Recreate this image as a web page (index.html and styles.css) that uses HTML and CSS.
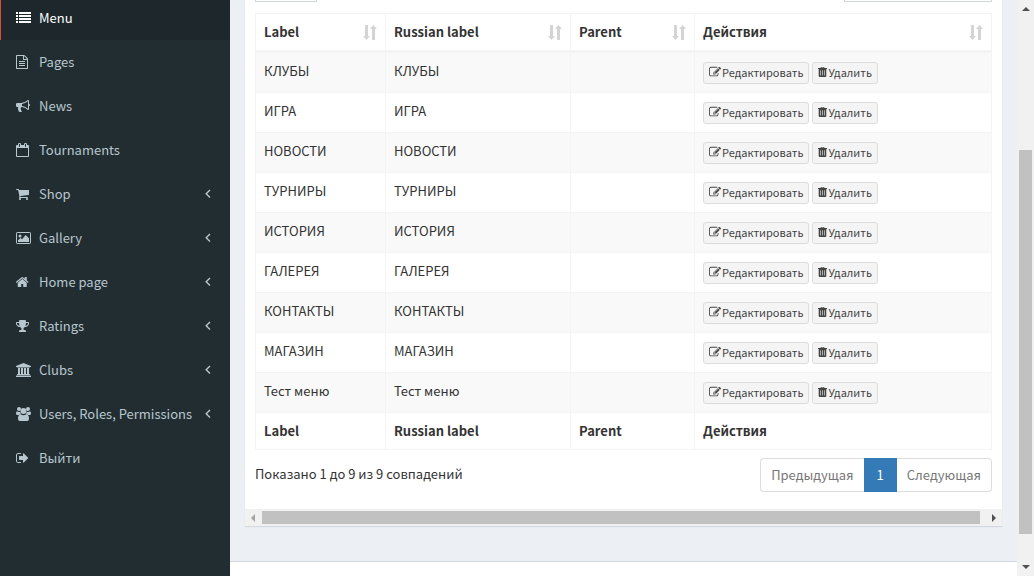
FILE: index.html
```html
<!DOCTYPE html>
<html lang="ru">
<head>
<meta charset="utf-8">
<title>Menu</title>
<link rel="stylesheet" href="styles.css">
</head>
<body>
<svg class="sprite" aria-hidden="true">
  <symbol id="i-list" viewBox="0 0 15 14"><path d="M0 1h2v2H0zM3 1h12v2H3zM0 4h2v2H0zM3 4h12v2H3zM0 7h2v2H0zM3 7h12v2H3zM0 10h2v2H0zM3 10h12v2H3z"/></symbol>
  <symbol id="i-file" viewBox="128 0 1920 1792"><path d="M1596 380q28 28 48 76t20 88v1152q0 40-28 68t-68 28h-1344q-40 0-68-28t-28-68v-1600q0-40 28-68t68-28h896q40 0 88 20t76 48zm-444-244v376h376q-10-29-22-41l-313-313q-12-12-41-22zm384 1528v-1024h-416q-40 0-68-28t-28-68v-416h-768v1536h1280zm-1024-864q0-14 9-23t23-9h704q14 0 23 9t9 23v64q0 14-9 23t-23 9h-704q-14 0-23-9t-9-23v-64zm736 224q14 0 23 9t9 23v64q0 14-9 23t-23 9h-704q-14 0-23-9t-9-23v-64q0-14 9-23t23-9h704zm0 256q14 0 23 9t9 23v64q0 14-9 23t-23 9h-704q-14 0-23-9t-9-23v-64q0-14 9-23t23-9h704z"/></symbol>
  <symbol id="i-horn" viewBox="0 0 1920 1792"><path d="M1664 640q53 0 90.5 37.5t37.5 90.5-37.500 90.500-90.500 37.500v384q0 52-38 90t-90 38q-417-347-812-380-58 19-91 66t-31 100.500 40 92.500q-20 33-23 65.500t6 58 33.500 55 48 50 61.500 50.500q-29 58-111.500 83t-168.500 11.500-132-55.500q-7-23-29.500-87.500t-32-94.500-23-89-15-101 3.500-98.500 22-110.500h-122q-66 0-113-47t-47-113v-192q0-66 47-113t113-47h480q435 0 896-384 52 0 90 38t38 90v384zm-128 604v-954q-394 302-768 343v270q377 42 768 341z"/></symbol>
  <symbol id="i-cal" viewBox="64 0 1920 1792"><path d="M192 1664h1408v-1024h-1408v1024zm384-1216v-288q0-14-9-23t-23-9h-64q-14 0-23 9t-9 23v288q0 14 9 23t23 9h64q14 0 23-9t9-23zm768 0v-288q0-14-9-23t-23-9h-64q-14 0-23 9t-9 23v288q0 14 9 23t23 9h64q14 0 23-9t9-23zm384-64v1280q0 52-38 90t-90 38h-1408q-52 0-90-38t-38-90v-1280q0-52 38-90t90-38h128v-96q0-66 47-113t113-47h64q66 0 113 47t47 113v96h384v-96q0-66 47-113t113-47h64q66 0 113 47t47 113v96h128q52 0 90 38t38 90z"/></symbol>
  <symbol id="i-cart" viewBox="64 0 1920 1792"><path d="M704 1536q0 52-38 90t-90 38-90-38-38-90 38-90 90-38 90 38 38 90zm896 0q0 52-38 90t-90 38-90-38-38-90 38-90 90-38 90 38 38 90zm128-1088v512q0 24-16.500 42.500t-40.500 21.500l-1044 122q13 60 13 70 0 16-24 64h920q26 0 45 19t19 45-19 45-45 19h-1024q-26 0-45-19t-19-45q0-11 8-31.500t16-36 21.500-40 15.500-29.500l-177-823h-204q-26 0-45-19t-19-45 19-45 45-19h256q16 0 28.500 6.500t19.500 15.500 13 24.500 8 26 5.500 29.500 4.500 26h1201q26 0 45 19t19 45z"/></symbol>
  <symbol id="i-pic" viewBox="0 0 15 14"><rect x=".5" y="1.500" width="14" height="11" rx=".7" fill="none" stroke="currentColor"/><circle cx="4" cy="5" r="1.500"/><path d="M2 11V9.300L4.500 7 6 8.200 9.700 4 13 7.300V11z"/></symbol>
  <symbol id="i-home" viewBox="100 0 1920 1792"><path d="M1472 992v480q0 26-19 45t-45 19h-384v-384h-256v384h-384q-26 0-45-19t-19-45v-480l1-6 575-474 575 474q1 2 1 6zm223-69l-62 74q-8 9-21 11h-3q-13 0-21-7l-692-577-692 577q-12 8-24 7-13-2-21-11l-62-74q-8-10-7-23.500t11-21.500l719-599q32-26 76-26t76 26l244 204v-195q0-14 9-23t23-9h192q14 0 23 9t9 23v408l219 182q10 8 11 21.500t-7 23.500z"/></symbol>
  <symbol id="i-cup" viewBox="64 0 1920 1792"><path d="M522 883q-74-162-74-371h-256v96q0 78 94.500 162t235.500 113zm1078-275v-96h-256q0 209-74 371 141-29 235.500-113t94.500-162zm128-128v128q0 71-41.500 143t-112 130-173 97.500-215.500 44.500q-42 54-95 95-38 34-52.500 72.500t-14.500 89.500q0 54 30.500 91t97.500 37q75 0 133.500 45.500t58.500 114.500v64q0 14-9 23t-23 9h-832q-14 0-23-9t-9-23v-64q0-69 58.500-114.500t133.500-45.500q67 0 97.500-37t30.500-91q0-51-14.500-89.500t-52.500-72.500q-53-41-95-95-113-5-215.500-44.500t-173-97.500-112-130-41.500-143v-128q0-40 28-68t68-28h288v-96q0-66 47-113t113-47h576q66 0 113 47t47 113v96h288q40 0 68 28t28 68z"/></symbol>
  <symbol id="i-bank" viewBox="0 0 15 14"><path d="M7.500 0 15 3v1h-1v.6H1V4H0V3zM2 5h2v6h1V5h2v6h1V5h2v6h1V5h2v6h.6l.4.5v.5H1v-.5l.4-.5H2zM.5 12.500h14l.5.5v1H0v-1z"/></symbol>
  <symbol id="i-users" viewBox="0 0 15 14"><circle cx="3" cy="2" r="2"/><circle cx="12" cy="2" r="2"/><circle cx="7.500" cy="4" r="3"/><path d="M1 4.200q1 .8 2 .8t1.400-.3Q4.300 6 5 7 3.600 7 2.800 8H1.500Q0 8 0 6.700 0 4.600 1 4.200zM14 4.200q-1 .8-2 .8t-1.400-.3q.1 1.300-.6 2.300 1.400 0 2.200 1h1.300Q15 8 15 6.700q0-2.100-1-2.500zM4.800 7.200q1.200 1.100 2.700 1.100t2.700-1.100Q13 7.200 13 11.700 13 14 11 14H4q-2 0-2-2.300 0-4.500 2.800-4.500z"/></symbol>
  <symbol id="i-exit" viewBox="64 0 1920 1792"><path d="M704 1440q0 4 1 20t.5 26.500-3 23.500-10 19.500-20.500 6.500h-320q-119 0-203.500-84.500t-84.500-203.500v-704q0-119 84.500-203.500t203.500-84.500h320q13 0 22.500 9.500t9.500 22.500q0 4 1 20t.5 26.500-3 23.500-10 19.500-20.500 6.500h-320q-66 0-113 47t-47 113v704q0 66 47 113t113 47h312l11.500 1 11.500 3 8 5.500 7 9 2 13.500zm928-544q0 26-19 45l-544 544q-19 19-45 19t-45-19-19-45v-288h-448q-26 0-45-19t-19-45v-384q0-26 19-45t45-19h448v-288q0-26 19-45t45-19 45 19l544 544q19 19 19 45z"/></symbol>
  <symbol id="i-left" viewBox="0 0 6 10"><path d="M5 1 1.200 4.700 5 8.400" fill="none" stroke="currentColor" stroke-width="1.400"/></symbol>
  <symbol id="i-edit" viewBox="0 0 1792 1792"><path d="M888 1184l116-116-152-152-116 116v56h96v96h56zm440-720q-16-16-33 1l-350 350q-17 17-1 33t33-1l350-350q17-17 1-33zm80 594v190q0 119-84.500 203.500t-203.500 84.500h-832q-119 0-203.500-84.500t-84.500-203.500v-832q0-119 84.500-203.500t203.500-84.500h832q63 0 117 25 15 7 18 23 3 17-9 29l-49 49q-14 14-32 8-23-6-45-6h-832q-66 0-113 47t-47 113v832q0 66 47 113t113 47h832q66 0 113-47t47-113v-126q0-13 9-22l64-64q15-15 35-7t20 29zm-96-738l288 288-672 672h-288v-288zm444 132l-92 92-288-288 92-92q28-28 68-28t68 28l152 152q28 28 28 68t-28 68z"/></symbol>
  <symbol id="i-trash" viewBox="0 0 9 12"><path fill-rule="evenodd" d="M0 2h2.400L3 1h3L6.600 2H9v1H8.300v7q0 1-1 1H1.700q-1 0-1-1V3H0zM3.400 2h2.200l-.2-.4H3.600zM2.400 4.200v5.300H3V4.200zM4.200 4.200v5.300h.6V4.200zM6 4.200v5.300h.6V4.200z"/></symbol>
  <symbol id="i-sort" viewBox="0 0 14 15"><path d="M2 0h3v11h2l-3.500 4L0 11h2zM9 15h3V4h2L10.500 0 7 4h2z"/></symbol>
</svg>

<div class="app">
  <nav class="sidebar" aria-label="Main">
    <a class="item active" href="#"><svg class="ico"><use href="#i-list"/></svg><span>Menu</span></a>
    <a class="item" href="#"><svg class="ico"><use href="#i-file"/></svg><span>Pages</span></a>
    <a class="item" href="#"><svg class="ico"><use href="#i-horn"/></svg><span>News</span></a>
    <a class="item" href="#"><svg class="ico"><use href="#i-cal"/></svg><span>Tournaments</span></a>
    <a class="item" href="#"><svg class="ico"><use href="#i-cart"/></svg><span>Shop</span><svg class="chev"><use href="#i-left"/></svg></a>
    <a class="item" href="#"><svg class="ico"><use href="#i-pic"/></svg><span>Gallery</span><svg class="chev"><use href="#i-left"/></svg></a>
    <a class="item" href="#"><svg class="ico"><use href="#i-home"/></svg><span>Home page</span><svg class="chev"><use href="#i-left"/></svg></a>
    <a class="item" href="#"><svg class="ico"><use href="#i-cup"/></svg><span>Ratings</span><svg class="chev"><use href="#i-left"/></svg></a>
    <a class="item" href="#"><svg class="ico"><use href="#i-bank"/></svg><span>Clubs</span><svg class="chev"><use href="#i-left"/></svg></a>
    <a class="item" href="#"><svg class="ico"><use href="#i-users"/></svg><span>Users, Roles, Permissions</span><svg class="chev"><use href="#i-left"/></svg></a>
    <a class="item" href="#"><svg class="ico"><use href="#i-exit"/></svg><span>Выйти</span></a>
  </nav>

  <div class="page">
    <main class="content">
      <section class="card">
        <div class="card-body">
          <div class="filters">
            <select class="field length" aria-label="Записей на странице"><option></option></select>
            <input class="field search" type="search" aria-label="Поиск">
          </div>
          <table class="grid">
            <colgroup><col class="c-label"><col class="c-rus"><col class="c-parent"><col></colgroup>
            <thead>
              <tr>
                <th><div class="head">Label<svg class="sort"><use href="#i-sort"/></svg></div></th>
                <th><div class="head">Russian label<svg class="sort"><use href="#i-sort"/></svg></div></th>
                <th><div class="head">Parent<svg class="sort"><use href="#i-sort"/></svg></div></th>
                <th><div class="head">Действия<svg class="sort"><use href="#i-sort"/></svg></div></th>
              </tr>
            </thead>
            <tbody>
              <tr><td>КЛУБЫ</td><td>КЛУБЫ</td><td></td><td><div class="actions"><button class="btn"><svg class="edit"><use href="#i-edit"/></svg>Редактировать</button><button class="btn"><svg class="trash"><use href="#i-trash"/></svg>Удалить</button></div></td></tr>
              <tr><td>ИГРА</td><td>ИГРА</td><td></td><td><div class="actions"><button class="btn"><svg class="edit"><use href="#i-edit"/></svg>Редактировать</button><button class="btn"><svg class="trash"><use href="#i-trash"/></svg>Удалить</button></div></td></tr>
              <tr><td>НОВОСТИ</td><td>НОВОСТИ</td><td></td><td><div class="actions"><button class="btn"><svg class="edit"><use href="#i-edit"/></svg>Редактировать</button><button class="btn"><svg class="trash"><use href="#i-trash"/></svg>Удалить</button></div></td></tr>
              <tr><td>ТУРНИРЫ</td><td>ТУРНИРЫ</td><td></td><td><div class="actions"><button class="btn"><svg class="edit"><use href="#i-edit"/></svg>Редактировать</button><button class="btn"><svg class="trash"><use href="#i-trash"/></svg>Удалить</button></div></td></tr>
              <tr><td>ИСТОРИЯ</td><td>ИСТОРИЯ</td><td></td><td><div class="actions"><button class="btn"><svg class="edit"><use href="#i-edit"/></svg>Редактировать</button><button class="btn"><svg class="trash"><use href="#i-trash"/></svg>Удалить</button></div></td></tr>
              <tr><td>ГАЛЕРЕЯ</td><td>ГАЛЕРЕЯ</td><td></td><td><div class="actions"><button class="btn"><svg class="edit"><use href="#i-edit"/></svg>Редактировать</button><button class="btn"><svg class="trash"><use href="#i-trash"/></svg>Удалить</button></div></td></tr>
              <tr><td>КОНТАКТЫ</td><td>КОНТАКТЫ</td><td></td><td><div class="actions"><button class="btn"><svg class="edit"><use href="#i-edit"/></svg>Редактировать</button><button class="btn"><svg class="trash"><use href="#i-trash"/></svg>Удалить</button></div></td></tr>
              <tr><td>МАГАЗИН</td><td>МАГАЗИН</td><td></td><td><div class="actions"><button class="btn"><svg class="edit"><use href="#i-edit"/></svg>Редактировать</button><button class="btn"><svg class="trash"><use href="#i-trash"/></svg>Удалить</button></div></td></tr>
              <tr><td>Тест меню</td><td>Тест меню</td><td></td><td><div class="actions"><button class="btn"><svg class="edit"><use href="#i-edit"/></svg>Редактировать</button><button class="btn"><svg class="trash"><use href="#i-trash"/></svg>Удалить</button></div></td></tr>
            </tbody>
            <tfoot>
              <tr><th>Label</th><th>Russian label</th><th>Parent</th><th>Действия</th></tr>
            </tfoot>
          </table>
          <div class="below">
            <div class="info">Показано 1 до 9 из 9 совпадений</div>
            <div class="pager"><a href="#">Предыдущая</a><a class="current" href="#">1</a><a href="#">Следующая</a></div>
          </div>
        </div>
        <div class="hbar"><i class="arrow west"></i><div class="hthumb"></div><i class="arrow east"></i></div>
      </section>
    </main>
    <footer class="footer"></footer>
  </div>

  <div class="vbar"><i class="arrow north"></i><div class="vtrack"><div class="vthumb"></div></div><i class="arrow south"></i></div>
</div>
</body>
</html>
```
FILE: styles.css
```css
* { box-sizing: border-box; }

body {
  margin: 0;
  font: 13px/20px "Noto Sans CJK SC", "Noto Sans", sans-serif;
  color: #333;
  background: #ecf0f5;
}

a { color: inherit; text-decoration: none; }
svg { display: block; flex: none; fill: currentColor; }
.sprite { position: absolute; width: 0; height: 0; }

.app { display: flex; height: 100vh; overflow: hidden; }

/* Sidebar */
.sidebar { flex: none; width: 230px; background: #222d32; color: #b8c7ce; }
.item {
  display: flex;
  align-items: center;
  height: 44px;
  padding: 0 19px 0 15px;
  border-left: 1px solid transparent;
}
.item.active {
  height: 40px;
  padding-bottom: 4px;
  color: #fff;
  background: #1e282c;
  border-left-color: #dd4b39;
}
.ico { width: 15px; height: 14px; margin-right: 8px; }
.chev { width: 6px; height: 10px; margin-left: auto; }

/* Page */
.page { flex: 1; min-width: 0; display: flex; flex-direction: column; }
.content { flex: 1; padding: 0 15px; }
.footer { height: 15px; background: #fff; border-top: 1px solid #d2d6de; }
.card { background: #fff; box-shadow: 0 1px 1px rgba(0, 0, 0, .1); }
.card-body { padding: 0 10px 17px; }

.filters {
  display: flex;
  justify-content: space-between;
  align-items: flex-end;
  height: 2px;
  margin-bottom: 11px;
  overflow: hidden;
}
.field { height: 30px; border: 1px solid #d2d6de; background: #fff; }
.length { width: 62px; }
.search { width: 148px; }

/* Table */
.grid {
  width: 100%;
  table-layout: fixed;
  border-collapse: separate;
  border-spacing: 0;
  border: solid #f4f4f4;
  border-width: 1px 0 0 1px;
}
.c-label { width: 130px; }
.c-rus { width: 185px; }
.c-parent { width: 124px; }
.grid th, .grid td {
  height: 40px;
  padding: 8px;
  text-align: left;
  vertical-align: top;
  border: solid #f4f4f4;
  border-width: 0 1px 1px 0;
}
.grid thead th { height: 39px; border-bottom-width: 3px; }
.grid tfoot th { height: 37px; }
.grid tbody tr:nth-child(odd) { background: #f9f9f9; }
.grid td { padding-bottom: 7px; }
.head { display: flex; justify-content: space-between; align-items: center; }
.sort { width: 14px; height: 15px; color: #d4d4d4; }

.actions { display: flex; gap: 3px; padding-top: 1px; }
.btn {
  display: flex;
  align-items: center;
  gap: 1px;
  height: 22px;
  padding: 0 5px 2px;
  font: 11px/18px "Noto Sans CJK SC", "Noto Sans", sans-serif;
  color: #444;
  background: #f4f4f4;
  border: 1px solid #ddd;
  border-radius: 3px;
}
.edit { width: 12px; height: 12px; }
.trash { width: 9px; height: 12px; }

.below { display: flex; justify-content: space-between; align-items: flex-start; padding-top: 8px; }
.info { padding-top: 6px; }
.pager { display: flex; color: #777; }
.pager a { height: 34px; padding: 6px 10px; background: #fff; border: 1px solid #ddd; }
.pager a:first-child { border-radius: 4px 0 0 4px; border-right: 0; }
.pager a:last-child { border-radius: 0 4px 4px 0; border-left: 0; }
.pager .current { padding: 6px 12px; color: #fff; background: #337ab7; border-color: #337ab7; }

/* Scrollbars */
.hbar { display: flex; align-items: center; height: 17px; background: #f1f1f1; }
.hthumb { flex: 1; height: 13px; margin-right: 5px; background: #c1c1c1; }
.vbar {
  flex: none;
  width: 17px;
  display: flex;
  flex-direction: column;
  align-items: center;
  background: #f1f1f1;
}
.vtrack { flex: 1; width: 13px; display: flex; flex-direction: column; }
.vthumb { height: 384px; margin-top: 133px; background: #c1c1c1; }
.arrow { flex: none; border: 0 solid transparent; }
.west { margin: 0 7px 0 6px; border-width: 4px 4px 4px 0; border-right-color: #a3a3a3; }
.east { margin: 0 6px 0 7px; border-width: 4px 0 4px 4px; border-left-color: #505050; }
.north { margin: 7px 0 6px; border-width: 0 4px 4px; border-bottom-color: #505050; }
.south { margin: 6px 0 7px; border-width: 4px 4px 0; border-top-color: #505050; }
```
